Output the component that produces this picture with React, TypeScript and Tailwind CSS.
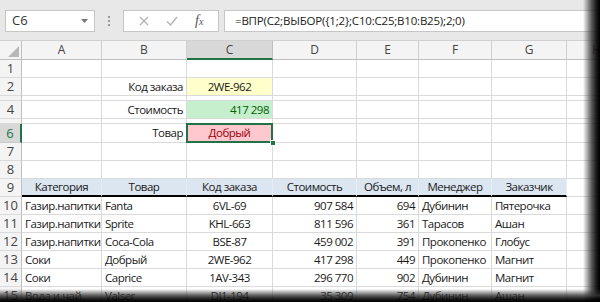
import React from "react";

// Ширины колонок (px) — как на скриншоте Excel
const COLS = [
  { key: "A", w: "w-[80px]" },
  { key: "B", w: "w-[85px]" },
  { key: "C", w: "w-[86px]" },
  { key: "D", w: "w-[84px]" },
  { key: "E", w: "w-[62px]" },
  { key: "F", w: "w-[73px]" },
  { key: "G", w: "w-[75px]" },
  { key: "H", w: "w-[60px]" },
];

type Align = "l" | "c" | "r";

const ROWS: { n: number; cells: string[] }[] = [
  { n: 10, cells: ["Газир.напитки", "Fanta", "6VL-69", "907 584", "694", "Дубинин", "Пятерочка"] },
  { n: 11, cells: ["Газир.напитки", "Sprite", "KHL-663", "811 596", "361", "Тарасов", "Ашан"] },
  { n: 12, cells: ["Газир.напитки", "Coca-Cola", "BSE-87", "459 002", "391", "Прокопенко", "Глобус"] },
  { n: 13, cells: ["Соки", "Добрый", "2WE-962", "417 298", "449", "Прокопенко", "Магнит"] },
  { n: 14, cells: ["Соки", "Caprice", "1AV-343", "296 770", "902", "Дубинин", "Магнит"] },
  { n: 15, cells: ["Вода и чай", "Valser", "DJ1-194", "35 309", "754", "Дубинин", "Ашан"] },
];

const ALIGN: Align[] = ["l", "l", "c", "r", "r", "l", "l"];
const HEAD = ["Категория", "Товар", "Код заказа", "Стоимость", "Объем, л", "Менеджер", "Заказчик"];

const alignCls = (a: Align) =>
  a === "l" ? "justify-start pl-[3px]" : a === "c" ? "justify-center" : "justify-end pr-[3px]";

function RowHead({ n, h, sel }: { n?: number; h: string; sel?: boolean }) {
  return (
    <div
      className={`w-[22px] ${h} shrink-0 flex items-center justify-center border-r border-b text-[13px] tracking-normal ${
        sel
          ? "bg-[#d8d8d8] border-r-2 border-r-[#217346] border-b-[#c8c8c8] text-[#217346]"
          : "bg-[#f4f4f4] border-r-[#bfbfbf] border-b-[#dadada] text-[#444]"
      }`}
    >
      {n}
    </div>
  );
}

function Cell({
  w,
  h,
  children,
  className = "",
}: {
  w: string;
  h: string;
  children?: React.ReactNode;
  className?: string;
}) {
  return (
    <div
      className={`${w} ${h} shrink-0 flex items-center border-r border-b border-[#dadada] whitespace-nowrap overflow-visible ${className}`}
    >
      {children}
    </div>
  );
}

function EmptyRow({ n, h }: { n?: number; h: string }) {
  return (
    <div className="flex">
      <RowHead n={n} h={h} />
      {COLS.map((c) => (
        <Cell key={c.key} w={c.w} h={h} />
      ))}
    </div>
  );
}

export default function App() {
  return (
    <div className="relative w-[600px] h-[302px] overflow-hidden bg-white font-['Open_Sans',sans-serif] text-[11.5px] tracking-[-0.5px] text-[#1a1a1a] leading-none">
      {/* Строка формул */}
      <div className="h-[41px] bg-[#e8e8e8] flex items-center gap-[5px] pl-[5px] pt-[1px] border-b border-[#d0d0d0] tracking-normal">
        <div className="w-[90px] h-[22px] bg-white border border-[#c6c6c6] flex items-center justify-between pl-[6px] pr-[6px] text-[13px] text-[#333]">
          <span>C6</span>
          <svg width="7" height="4" viewBox="0 0 7 4">
            <path d="M0 0 L7 0 L3.5 4 Z" fill="#777" />
          </svg>
        </div>
        <div className="w-[18px] flex flex-col items-center gap-[2px]">
          <span className="w-[2px] h-[2px] bg-[#999]" />
          <span className="w-[2px] h-[2px] bg-[#999]" />
          <span className="w-[2px] h-[2px] bg-[#999]" />
        </div>
        <div className="w-[96px] h-[22px] bg-white border border-[#c6c6c6] flex items-center justify-around px-[6px]">
          <svg width="10" height="10" viewBox="0 0 10 10">
            <path d="M1 1 L9 9 M9 1 L1 9" stroke="#b4b4b4" strokeWidth="1.4" />
          </svg>
          <svg width="12" height="10" viewBox="0 0 12 10">
            <path d="M1 5.5 L4.5 9 L11 1" stroke="#b4b4b4" strokeWidth="1.4" fill="none" />
          </svg>
          <span className="font-['Liberation_Serif',serif] italic text-[14px] text-[#555]">
            f<span className="text-[10px]">x</span>
          </span>
        </div>
        <div className="flex-1 h-[22px] bg-white border border-[#c6c6c6] flex items-center pl-[10px] text-[11.5px] tracking-[-0.2px] text-[#222]">
          =ВПР(C2;ВЫБОР({"{"}1;2{"}"};C10:C25;B10:B25);2;0)
        </div>
      </div>

      {/* Заголовки колонок */}
      <div className="flex h-[19px] bg-[#f4f4f4] text-[#444] text-[12px] tracking-normal">
        <div className="w-[22px] shrink-0 border-r border-b border-[#bfbfbf] flex items-end justify-end p-[2px]">
          <svg width="11" height="11" viewBox="0 0 11 11">
            <path d="M11 0 L11 11 L0 11 Z" fill="#b8b8b8" />
          </svg>
        </div>
        {COLS.map((c) => (
          <div
            key={c.key}
            className={`${c.w} shrink-0 flex items-center justify-center border-r ${
              c.key === "C"
                ? "bg-[#d8d8d8] border-r-[#bfbfbf] border-b-2 border-b-[#217346]"
                : "border-r-[#d0d0d0] border-b border-b-[#bfbfbf]"
            }`}
          >
            {c.key}
          </div>
        ))}
      </div>

      {/* Верхний блок: поиск */}
      <EmptyRow n={1} h="h-[18px]" />
      <div className="flex">
        <RowHead n={2} h="h-[18px]" />
        <Cell w="w-[80px]" h="h-[18px]" />
        <Cell w="w-[85px]" h="h-[18px]" className={alignCls("r")}>
          Код заказа
        </Cell>
        <Cell w="w-[86px]" h="h-[18px]" className="justify-center bg-[#ffffcc]">
          2WE-962
        </Cell>
        {COLS.slice(3).map((c) => (
          <Cell key={c.key} w={c.w} h="h-[18px]" />
        ))}
      </div>
      <EmptyRow h="h-[5px]" />
      <div className="flex">
        <RowHead n={4} h="h-[18px]" />
        <Cell w="w-[80px]" h="h-[18px]" />
        <Cell w="w-[85px]" h="h-[18px]" className={alignCls("r")}>
          Стоимость
        </Cell>
        <Cell w="w-[86px]" h="h-[18px]" className={`${alignCls("r")} bg-[#c6efce] text-[#006100]`}>
          417 298
        </Cell>
        {COLS.slice(3).map((c) => (
          <Cell key={c.key} w={c.w} h="h-[18px]" />
        ))}
      </div>
      <EmptyRow h="h-[5px]" />
      <div className="flex">
        <RowHead n={6} h="h-[19px]" sel />
        <Cell w="w-[80px]" h="h-[19px]" />
        <Cell w="w-[85px]" h="h-[19px]" className={alignCls("r")}>
          Товар
        </Cell>
        <Cell w="w-[86px]" h="h-[19px]" className="relative justify-center bg-[#ffc7ce] text-[#9c0006]">
          Добрый
          <span className="absolute -left-px -top-px -right-px -bottom-px border-2 border-[#217346]" />
          <span className="absolute -right-[4px] -bottom-[4px] w-[6px] h-[6px] bg-[#217346] border border-white" />
        </Cell>
        {COLS.slice(3).map((c) => (
          <Cell key={c.key} w={c.w} h="h-[19px]" />
        ))}
      </div>
      <EmptyRow n={7} h="h-[18px]" />
      <EmptyRow n={8} h="h-[18px]" />

      {/* Таблица */}
      <div className="flex">
        <RowHead n={9} h="h-[18px]" />
        {HEAD.map((t, i) => (
          <Cell
            key={t}
            w={COLS[i].w}
            h="h-[18px]"
            className="justify-center bg-[#dce6f1] border-r-[#e6edf6] border-b-2 border-b-black"
          >
            {t}
          </Cell>
        ))}
        <Cell w="w-[60px]" h="h-[18px]" />
      </div>
      {ROWS.map((r) => (
        <div key={r.n} className="flex">
          <RowHead n={r.n} h="h-[18px]" />
          {r.cells.map((v, i) => (
            <Cell key={i} w={COLS[i].w} h="h-[18px]" className={alignCls(ALIGN[i])}>
              {v}
            </Cell>
          ))}
          <Cell w="w-[60px]" h="h-[18px]" />
        </div>
      ))}

      {/* Тень рамки */}
      <div className="absolute top-0 bottom-0 right-0 w-[17px] bg-gradient-to-r from-transparent via-[#333]/80 to-black" />
      <div className="absolute left-0 right-0 bottom-0 h-[13px] bg-gradient-to-b from-transparent via-[#333]/80 to-black" />
    </div>
  );
}
